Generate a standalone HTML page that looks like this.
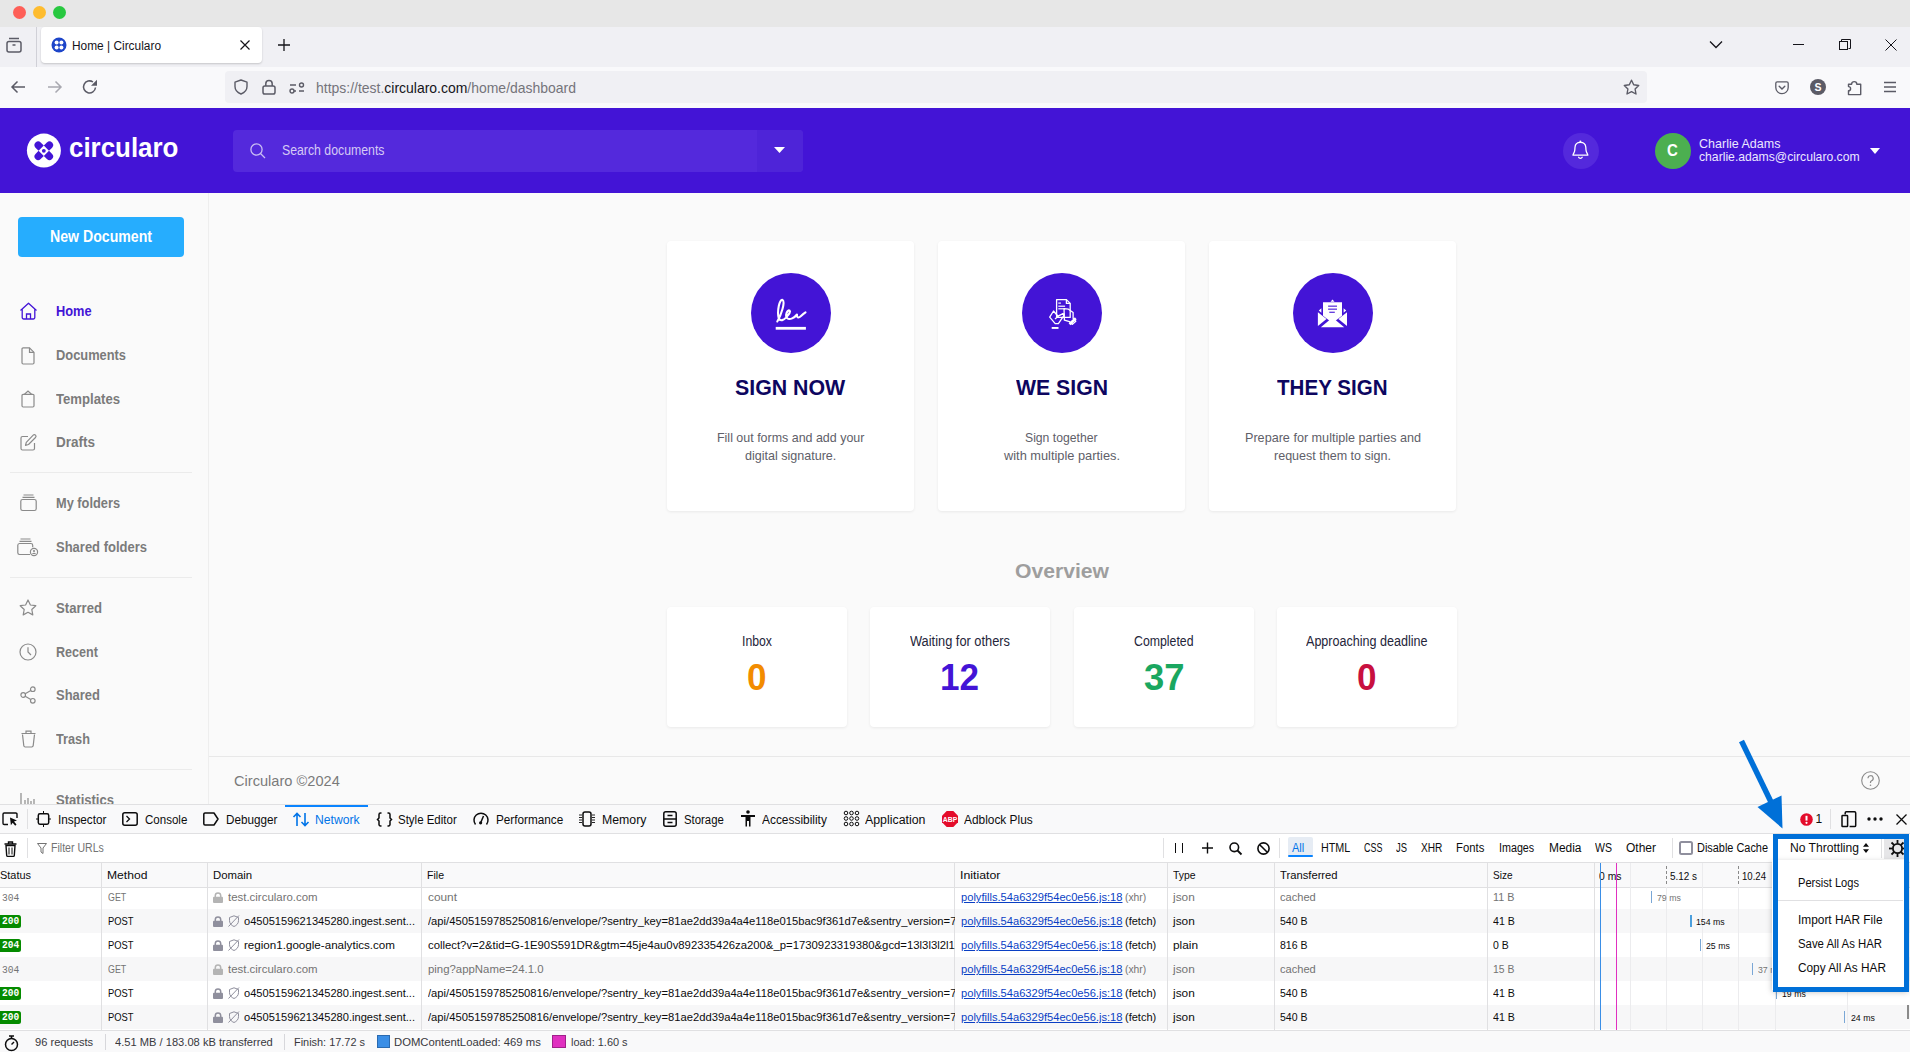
<!DOCTYPE html>
<html><head><meta charset="utf-8">
<style>
*{box-sizing:border-box;margin:0;padding:0}
html,body{width:1910px;height:1052px;overflow:hidden;background:#fafafa;font-family:"Liberation Sans",sans-serif}
.a{position:absolute}
.t{position:absolute;white-space:nowrap;line-height:1}
svg.i{position:absolute;overflow:visible}
</style></head><body>
<div class="a" style="left:0px;top:0px;width:1910px;height:27px;background:#e7e7e7;"></div>
<div class="a" style="left:12.5px;top:5.5px;width:13px;height:13px;background:#fe5f57;border-radius:50%"></div>
<div class="a" style="left:32.5px;top:5.5px;width:13px;height:13px;background:#febc2e;border-radius:50%"></div>
<div class="a" style="left:52.5px;top:5.5px;width:13px;height:13px;background:#28c840;border-radius:50%"></div>
<div class="a" style="left:0px;top:27px;width:1910px;height:40px;background:#f0f0f4;"></div>
<div class="a" style="left:0px;top:67px;width:1910px;height:41px;background:#f9f9fb;"></div>
<div class="a" style="left:36px;top:27px;width:1px;height:40px;background:#d0d0d7;"></div>
<svg class="i" style="left:6px;top:37px;" width="16" height="16" viewBox="0 0 16 16"><rect x="1" y="4.5" width="14" height="10.5" rx="2" fill="none" stroke="#5b5b66" stroke-width="1.5"/><path d="M3 1.5h10" stroke="#5b5b66" stroke-width="1.5"/><path d="M6.5 8h3" stroke="#5b5b66" stroke-width="1.5"/></svg>
<div class="a" style="left:41px;top:27px;width:221px;height:36px;background:#ffffff;border-radius:4px;box-shadow:0 1px 2px rgba(0,0,0,.18)"></div>
<svg class="i" style="left:51px;top:37px;" width="16" height="16" viewBox="0 0 16 16"><circle cx="8" cy="8" r="7.5" fill="#1d45c9"/><circle cx="5.6" cy="5.6" r="2" fill="#fff"/><circle cx="10.4" cy="5.6" r="2" fill="#fff"/><circle cx="5.6" cy="10.4" r="2" fill="#fff"/><circle cx="10.4" cy="10.4" r="2" fill="#fff"/><circle cx="8" cy="8" r="1" fill="#1d45c9"/></svg>
<div class="t" style="left:72.4px;top:39.84px;font:400 12px 'Liberation Sans', sans-serif;line-height:1;color:#15141a;transform:scaleX(0.9910);transform-origin:0 0;">Home | Circularo</div>
<svg class="i" style="left:239px;top:39px;" width="12" height="12" viewBox="0 0 12 12"><path d="M1.5 1.5l9 9M10.5 1.5l-9 9" stroke="#15141a" stroke-width="1.2"/></svg>
<svg class="i" style="left:277px;top:38px;" width="14" height="14" viewBox="0 0 14 14"><path d="M7 1v12M1 7h12" stroke="#15141a" stroke-width="1.3"/></svg>
<svg class="i" style="left:1709px;top:40px;" width="14" height="9" viewBox="0 0 14 9"><path d="M1 1.5l6 6 6-6" fill="none" stroke="#15141a" stroke-width="1.3"/></svg>
<div class="a" style="left:1793px;top:44px;width:11px;height:1px;background:#15141a;"></div>
<svg class="i" style="left:1839px;top:39px;" width="12" height="12" viewBox="0 0 12 12"><rect x="0.5" y="2.5" width="8" height="8" fill="none" stroke="#15141a" stroke-width="1"/><path d="M2.5 2.5V0.5h9v9h-2" fill="none" stroke="#15141a" stroke-width="1"/></svg>
<svg class="i" style="left:1885px;top:39px;" width="12" height="12" viewBox="0 0 12 12"><path d="M0.5 0.5l11 11M11.5 0.5l-11 11" stroke="#15141a" stroke-width="1"/></svg>
<svg class="i" style="left:10px;top:80px;" width="16" height="14" viewBox="0 0 16 14"><path d="M15 7H2M7.5 1.5L2 7l5.5 5.5" fill="none" stroke="#5b5b66" stroke-width="1.5"/></svg>
<svg class="i" style="left:47px;top:80px;" width="16" height="14" viewBox="0 0 16 14"><path d="M1 7h13M8.5 1.5L14 7l-5.5 5.5" fill="none" stroke="#a8a8b0" stroke-width="1.5"/></svg>
<svg class="i" style="left:82px;top:79px;" width="16" height="16" viewBox="0 0 16 16"><path d="M13.5 8.5A6 6 0 1 1 11 3" fill="none" stroke="#5b5b66" stroke-width="1.5"/><path d="M15 0.8v6h-6z" fill="#5b5b66"/></svg>
<div class="a" style="left:225px;top:71px;width:1422px;height:31.5px;background:#f0f0f4;border-radius:4px"></div>
<svg class="i" style="left:233px;top:79px;" width="16" height="16" viewBox="0 0 16 16"><path d="M8 1L2 3.2v4.3c0 3.5 2.7 6.2 6 7.5 3.3-1.3 6-4 6-7.5V3.2z" fill="none" stroke="#5b5b66" stroke-width="1.4" stroke-linejoin="round"/></svg>
<svg class="i" style="left:262px;top:79px;" width="14" height="16" viewBox="0 0 14 16"><rect x="1" y="7" width="12" height="8" rx="1.8" fill="none" stroke="#5b5b66" stroke-width="1.5"/><path d="M3.8 7V4.8a3.2 3.2 0 0 1 6.4 0V7" fill="none" stroke="#5b5b66" stroke-width="1.5"/></svg>
<svg class="i" style="left:289px;top:82px;" width="16" height="12" viewBox="0 0 16 12"><path d="M1 9h6M10 3H15M1 3h6M10 9h5" stroke="#5b5b66" stroke-width="1.5"/><circle cx="3" cy="9" r="2" fill="#f0f0f4" stroke="#5b5b66" stroke-width="1.4"/><circle cx="12.5" cy="3" r="2" fill="#f0f0f4" stroke="#5b5b66" stroke-width="1.4"/></svg>
<div class="t" style="left:315.5px;top:81.03px;font:400 14.5px 'Liberation Sans', sans-serif;line-height:1;color:#15141a;transform:scaleX(0.9630);transform-origin:0 0;"><span style="color:#75747b">https://test.</span>circularo.com<span style="color:#75747b">/home/dashboard</span></div>
<svg class="i" style="left:1623px;top:79px;" width="17" height="17" viewBox="0 0 17 17"><path d="M8.5 1.2l2.2 4.6 5 .7-3.6 3.5.9 5-4.5-2.4-4.5 2.4.9-5L1.3 6.5l5-.7z" fill="none" stroke="#5b5b66" stroke-width="1.4" stroke-linejoin="round"/></svg>
<svg class="i" style="left:1775px;top:81px;" width="14" height="14" viewBox="0 0 14 14"><path d="M2.2 .8h9.6A1.4 1.4 0 0 1 13.2 2.2V6.5a6.2 6.2 0 0 1-12.4 0V2.2A1.4 1.4 0 0 1 2.2 .8z" fill="none" stroke="#5b5b66" stroke-width="1.3"/><path d="M4.2 5.3L7 8l2.8-2.7" fill="none" stroke="#5b5b66" stroke-width="1.4" stroke-linecap="round"/></svg>
<svg class="i" style="left:1810px;top:79px;" width="16" height="16" viewBox="0 0 16 16"><circle cx="8" cy="8" r="8" fill="#5b5b66"/><text x="8" y="12" text-anchor="middle" font-family="Liberation Sans" font-weight="700" font-size="10.5" fill="#fff">S</text></svg>
<svg class="i" style="left:1847px;top:81px;" width="16" height="16" viewBox="0 0 16 16"><path d="M1.5 3.2H4.6A2.6 2.6 0 0 1 9.8 3.2H13.7V13.6H1.5V9.8A2.1 2.1 0 0 0 1.5 5.6Z" fill="none" stroke="#5b5b66" stroke-width="1.4" stroke-linejoin="round"/></svg>
<svg class="i" style="left:1883px;top:81px;" width="14" height="12" viewBox="0 0 14 12"><path d="M1 1.5h12M1 6h12M1 10.5h12" stroke="#5b5b66" stroke-width="1.4"/></svg>
<div class="a" style="left:0px;top:108px;width:1910px;height:85px;background:#4314d6;"></div>
<svg class="i" style="left:26px;top:133px;" width="36" height="36" viewBox="0 0 36 36"><circle cx="17.9" cy="17.6" r="17" fill="#fff"/><g fill="#4314d6"><path d="M17.8 12.6L12.6 17.8L9.48 14.68A3.68 3.68 0 0 1 14.68 9.48Z"/><path d="M17.8 12.6L23 17.8L26.12 14.68A3.68 3.68 0 0 0 20.92 9.48Z"/><path d="M17.8 23L12.6 17.8L9.48 20.92A3.68 3.68 0 0 0 14.68 26.12Z"/><path d="M17.8 23L23 17.8L26.12 20.92A3.68 3.68 0 0 1 20.92 26.12Z"/><circle cx="17.8" cy="17.8" r="1.9"/></g></svg>
<div class="t" style="left:68.5px;top:135.14px;font:700 27px 'Liberation Sans', sans-serif;line-height:1;color:#ffffff;transform:scaleX(0.9591);transform-origin:0 0;">circularo</div>
<div class="a" style="left:233px;top:130px;width:570px;height:42px;background:#5429dc;border-radius:4px"></div>
<div class="a" style="left:757px;top:130px;width:46px;height:42px;background:#4e24d8;border-radius:0 4px 4px 0"></div>
<svg class="i" style="left:250px;top:143px;" width="16" height="16" viewBox="0 0 16 16"><circle cx="6.5" cy="6.5" r="5.6" fill="none" stroke="#c9bdf3" stroke-width="1.3"/><path d="M10.5 10.5l4.5 4.5" stroke="#c9bdf3" stroke-width="1.3"/></svg>
<div class="t" style="left:282.0px;top:143.15px;font:400 14px 'Liberation Sans', sans-serif;line-height:1;color:#d4caf5;transform:scaleX(0.8781);transform-origin:0 0;">Search documents</div>
<svg class="i" style="left:774px;top:147px;" width="11" height="7" viewBox="0 0 11 7"><path d="M0 0h11L5.5 6z" fill="#ffffff"/></svg>
<div class="a" style="left:1563px;top:133px;width:36px;height:36px;background:#5429dc;border-radius:50%"></div>
<svg class="i" style="left:1571px;top:140px;" width="19" height="20" viewBox="0 0 19 20"><circle cx="9.4" cy="1.4" r="1" fill="#fff"/><path d="M2 15.2C2 13.6 3.6 13 3.8 10L4 7.2C4.2 4.2 6.5 2.3 9.4 2.3S14.6 4.2 14.8 7.2L15 10C15.2 13 16.8 13.6 16.8 15.2Z" fill="none" stroke="#fff" stroke-width="1.3" stroke-linejoin="round"/><path d="M7.6 17.3A2 2 0 0 0 11.2 17.3" fill="none" stroke="#fff" stroke-width="1.3" stroke-linecap="round"/></svg>
<div class="a" style="left:1655px;top:133px;width:36px;height:36px;background:#4caf50;border-radius:50%"></div>
<div class="t" style="left:1667.3px;top:143.46px;font:700 16px 'Liberation Sans', sans-serif;line-height:1;color:#ffffff;transform:scaleX(0.9341);transform-origin:0 0;">C</div>
<div class="t" style="left:1698.8px;top:136.57px;font:400 13.5px 'Liberation Sans', sans-serif;line-height:1;color:#ece8ff;transform:scaleX(0.9271);transform-origin:0 0;">Charlie Adams</div>
<div class="t" style="left:1698.8px;top:150.37px;font:400 13.5px 'Liberation Sans', sans-serif;line-height:1;color:#ece8ff;transform:scaleX(0.9022);transform-origin:0 0;">charlie.adams@circularo.com</div>
<svg class="i" style="left:1870px;top:148px;" width="10" height="6" viewBox="0 0 10 6"><path d="M0 0h10L5 6z" fill="#ffffff"/></svg>
<div class="a" style="left:208px;top:193px;width:1px;height:611px;background:#eeeeee;"></div>
<div class="a" style="left:18px;top:217px;width:166px;height:40px;background:#26adfe;border-radius:4px"></div>
<div class="t" style="left:50.0px;top:228.76px;font:700 16px 'Liberation Sans', sans-serif;line-height:1;color:#ffffff;transform:scaleX(0.8825);transform-origin:0 0;">New Document</div>
<div class="t" style="left:55.5px;top:304.15px;font:700 14px 'Liberation Sans', sans-serif;line-height:1;color:#4314d6;transform:scaleX(0.9150);transform-origin:0 0;">Home</div>
<div class="t" style="left:55.5px;top:348.15px;font:700 14px 'Liberation Sans', sans-serif;line-height:1;color:#7b7b7b;transform:scaleX(0.9182);transform-origin:0 0;">Documents</div>
<div class="t" style="left:55.5px;top:392.15px;font:700 14px 'Liberation Sans', sans-serif;line-height:1;color:#7b7b7b;transform:scaleX(0.9382);transform-origin:0 0;">Templates</div>
<div class="t" style="left:55.5px;top:435.15px;font:700 14px 'Liberation Sans', sans-serif;line-height:1;color:#7b7b7b;transform:scaleX(0.9637);transform-origin:0 0;">Drafts</div>
<div class="t" style="left:55.5px;top:496.15px;font:700 14px 'Liberation Sans', sans-serif;line-height:1;color:#7b7b7b;transform:scaleX(0.9141);transform-origin:0 0;">My folders</div>
<div class="t" style="left:55.5px;top:540.15px;font:700 14px 'Liberation Sans', sans-serif;line-height:1;color:#7b7b7b;transform:scaleX(0.9283);transform-origin:0 0;">Shared folders</div>
<div class="t" style="left:55.5px;top:601.15px;font:700 14px 'Liberation Sans', sans-serif;line-height:1;color:#7b7b7b;transform:scaleX(0.9382);transform-origin:0 0;">Starred</div>
<div class="t" style="left:55.5px;top:645.15px;font:700 14px 'Liberation Sans', sans-serif;line-height:1;color:#7b7b7b;transform:scaleX(0.8996);transform-origin:0 0;">Recent</div>
<div class="t" style="left:55.5px;top:688.15px;font:700 14px 'Liberation Sans', sans-serif;line-height:1;color:#7b7b7b;transform:scaleX(0.9269);transform-origin:0 0;">Shared</div>
<div class="t" style="left:55.5px;top:732.15px;font:700 14px 'Liberation Sans', sans-serif;line-height:1;color:#7b7b7b;transform:scaleX(0.9101);transform-origin:0 0;">Trash</div>
<div class="t" style="left:55.5px;top:793.15px;font:700 14px 'Liberation Sans', sans-serif;line-height:1;color:#7b7b7b;transform:scaleX(0.9317);transform-origin:0 0;">Statistics</div>
<div class="a" style="left:10px;top:472px;width:182px;height:1px;background:#ebebeb;"></div>
<div class="a" style="left:10px;top:577px;width:182px;height:1px;background:#ebebeb;"></div>
<div class="a" style="left:10px;top:769px;width:182px;height:1px;background:#ebebeb;"></div>
<svg class="i" style="left:19px;top:302px;" width="19" height="18" viewBox="0 0 19 18"><path d="M1.5 8.5L9.5 1.2l8 7.3" fill="none" stroke="#4314d6" stroke-width="1.3" stroke-linejoin="round"/><path d="M3.2 7.3v8.2a1.5 1.5 0 0 0 1.5 1.5h9.6a1.5 1.5 0 0 0 1.5-1.5V7.3" fill="none" stroke="#4314d6" stroke-width="1.3"/><path d="M7.5 17v-5h4v5" fill="none" stroke="#4314d6" stroke-width="1.3"/></svg>
<svg class="i" style="left:21px;top:347px;" width="14" height="17" viewBox="0 0 14 17"><path d="M1 2a1.2 1.2 0 0 1 1.2-1.2h6.3L13 5.3v10.5a1.2 1.2 0 0 1-1.2 1.2H2.2A1.2 1.2 0 0 1 1 15.8z" fill="none" stroke="#8a8a8a" stroke-width="1.2" stroke-linejoin="round"/><path d="M8.5 .8v4.5H13" fill="none" stroke="#8a8a8a" stroke-width="1.2"/></svg>
<svg class="i" style="left:21px;top:390px;" width="14" height="17" viewBox="0 0 14 17"><path d="M1 5.5V15.8A1.2 1.2 0 0 0 2.2 17h9.6a1.2 1.2 0 0 0 1.2-1.2V5.5A1.2 1.2 0 0 0 11.8 4.3H2.2A1.2 1.2 0 0 0 1 5.5z" fill="none" stroke="#8a8a8a" stroke-width="1.2"/><path d="M3.5 4.3L7 1l3.5 3.3" fill="none" stroke="#8a8a8a" stroke-width="1.2"/></svg>
<svg class="i" style="left:20px;top:434px;" width="17" height="17" viewBox="0 0 17 17"><path d="M8 2.5H2.5A1.5 1.5 0 0 0 1 4v10.5A1.5 1.5 0 0 0 2.5 16H13a1.5 1.5 0 0 0 1.5-1.5V9" fill="none" stroke="#8a8a8a" stroke-width="1.2"/><path d="M13.2 1.2a1.6 1.6 0 0 1 2.3 2.3L8.5 10.5l-3 .8.8-3z" fill="none" stroke="#8a8a8a" stroke-width="1.2" stroke-linejoin="round"/></svg>
<svg class="i" style="left:20px;top:494px;" width="17" height="17" viewBox="0 0 17 17"><rect x="0.8" y="5.5" width="15.4" height="11" rx="1.8" fill="none" stroke="#8a8a8a" stroke-width="1.2"/><path d="M2.5 3.3h12M3.5 1h10" stroke="#8a8a8a" stroke-width="1.2"/></svg>
<svg class="i" style="left:17px;top:538px;" width="22" height="18" viewBox="0 0 22 18"><path d="M13 16.5H2.5A1.8 1.8 0 0 1 .8 14.7V7.3A1.8 1.8 0 0 1 2.5 5.5h11.4a1.8 1.8 0 0 1 1.8 1.8v2" fill="none" stroke="#8a8a8a" stroke-width="1.2"/><path d="M2.5 3.3h12M3.5 1h10" stroke="#8a8a8a" stroke-width="1.2"/><circle cx="17" cy="14" r="3.6" fill="none" stroke="#8a8a8a" stroke-width="1.2"/><circle cx="17" cy="13" r="1.1" fill="#8a8a8a"/><path d="M15 16a2.2 2.2 0 0 1 4 0" fill="#8a8a8a"/></svg>
<svg class="i" style="left:19px;top:599px;" width="18" height="17" viewBox="0 0 18 17"><path d="M9 1l2.4 5 5.4.7-4 3.8 1 5.4L9 13.3 4.2 15.9l1-5.4-4-3.8 5.4-.7z" fill="none" stroke="#8a8a8a" stroke-width="1.2" stroke-linejoin="round"/></svg>
<svg class="i" style="left:19px;top:643px;" width="18" height="18" viewBox="0 0 18 18"><circle cx="9" cy="9" r="8" fill="none" stroke="#8a8a8a" stroke-width="1.2"/><path d="M9 4.2V9l3 3" fill="none" stroke="#8a8a8a" stroke-width="1.2"/></svg>
<svg class="i" style="left:20px;top:686px;" width="16" height="18" viewBox="0 0 16 18"><circle cx="12.8" cy="3.2" r="2.3" fill="none" stroke="#8a8a8a" stroke-width="1.2"/><circle cx="3.2" cy="9" r="2.3" fill="none" stroke="#8a8a8a" stroke-width="1.2"/><circle cx="12.8" cy="14.8" r="2.3" fill="none" stroke="#8a8a8a" stroke-width="1.2"/><path d="M5.2 7.8l5.6-3.4M5.2 10.2l5.6 3.4" stroke="#8a8a8a" stroke-width="1.2"/></svg>
<svg class="i" style="left:21px;top:730px;" width="15" height="18" viewBox="0 0 15 18"><path d="M1.5 4.5l1.3 11.2a1.5 1.5 0 0 0 1.5 1.3h6.4a1.5 1.5 0 0 0 1.5-1.3L13.5 4.5" fill="none" stroke="#8a8a8a" stroke-width="1.2"/><path d="M.5 3.5h14M5 3.3V1.2h5v2.1" fill="none" stroke="#8a8a8a" stroke-width="1.2"/></svg>
<svg class="i" style="left:20px;top:793px;" width="16" height="14" viewBox="0 0 16 14"><path d="M1 0v13.5h15M5 13V7M8 13V5M11 13V8M14 13V6" fill="none" stroke="#8a8a8a" stroke-width="1.2"/></svg>
<div class="a" style="left:209px;top:193px;width:1701px;height:564px;background:#fafafa;"></div>
<div class="a" style="left:667px;top:241px;width:247px;height:270px;background:#ffffff;border-radius:4px;box-shadow:0 1px 3px rgba(0,0,0,.07)"></div>
<div class="a" style="left:750.5px;top:273px;width:80px;height:80px;background:#4314d6;border-radius:50%"></div>
<svg class="i" style="left:750.5px;top:273px;" width="80" height="80" viewBox="0 0 80 80"><path d="M26.3 48.5C30 42.5 34.5 29 31.6 27C28.5 25.5 25.8 38.5 27.8 45.5C29.3 48.8 33 46.8 35 44.6C37 42 40.2 38.8 38.6 37.6C36.5 36.3 33.5 42.5 36.3 45.3C38.8 47.3 43.5 44.8 46 41.5C45.6 44.5 47.3 45.6 50 43C51.5 41.6 53 40.3 54.5 39.3" fill="none" stroke="#ffffff" stroke-width="2.1" stroke-linecap="round" stroke-linejoin="round"/><rect x="24.7" y="53.9" width="30.2" height="2.8" fill="#ffffff"/></svg>
<div class="t" style="left:735.4px;top:377.38px;font:700 22px 'Liberation Sans', sans-serif;line-height:1;color:#0d0660;transform:scaleX(0.9695);transform-origin:0 0;">SIGN NOW</div>
<div class="t" style="left:716.8px;top:430.50px;font:400 13px 'Liberation Sans', sans-serif;line-height:1;color:#606069;transform:scaleX(0.9577);transform-origin:0 0;">Fill out forms and add your</div>
<div class="t" style="left:744.9px;top:448.50px;font:400 13px 'Liberation Sans', sans-serif;line-height:1;color:#606069;transform:scaleX(0.9644);transform-origin:0 0;">digital signature.</div>
<div class="a" style="left:938px;top:241px;width:247px;height:270px;background:#ffffff;border-radius:4px;box-shadow:0 1px 3px rgba(0,0,0,.07)"></div>
<div class="a" style="left:1021.5px;top:273px;width:80px;height:80px;background:#4314d6;border-radius:50%"></div>
<svg class="i" style="left:1021.5px;top:273px;" width="80" height="80" viewBox="0 0 80 80"><g fill="none" stroke="#ffffff" stroke-width="1.3" stroke-linejoin="round"><path d="M34.6 26.6h9.8l3.8 3.8v14H34.6z"/><path d="M44.4 26.6v3.8h3.8"/><path d="M42 35.6l4.5 0.6 4.6 3.4v5.6l2.7 3-3.4 3.2-3-2.8-5-1.4z" /><path d="M31.5 38l4.5 5.2 5-2.6 1 1.8-5.6 8.2h-3.2l-5.5-6.4z"/><path d="M33 46l3.5-3"/></g><g fill="#ffffff"><rect x="36.3" y="29.5" width="2.6" height="1.2"/><rect x="36.3" y="32.6" width="6.8" height="1.2"/><rect x="36.3" y="35.2" width="6.8" height="1.2"/><rect x="29.7" y="54" width="6.8" height="1.9"/></g><path d="M47.5 51.3l6.3-6.1" stroke="#ffffff" stroke-width="2.6"/><path d="M40 41.5c1-1 2-1 3 0" stroke="#ffffff" stroke-width="0.9" fill="none"/></svg>
<div class="t" style="left:1015.5px;top:377.38px;font:700 22px 'Liberation Sans', sans-serif;line-height:1;color:#0d0660;transform:scaleX(0.9649);transform-origin:0 0;">WE SIGN</div>
<div class="t" style="left:1025.2px;top:430.50px;font:400 13px 'Liberation Sans', sans-serif;line-height:1;color:#606069;transform:scaleX(0.9374);transform-origin:0 0;">Sign together</div>
<div class="t" style="left:1003.5px;top:448.50px;font:400 13px 'Liberation Sans', sans-serif;line-height:1;color:#606069;transform:scaleX(0.9849);transform-origin:0 0;">with multiple parties.</div>
<div class="a" style="left:1209px;top:241px;width:247px;height:270px;background:#ffffff;border-radius:4px;box-shadow:0 1px 3px rgba(0,0,0,.07)"></div>
<div class="a" style="left:1292.5px;top:273px;width:80px;height:80px;background:#4314d6;border-radius:50%"></div>
<svg class="i" style="left:1292.5px;top:273px;" width="80" height="80" viewBox="0 0 80 80"><g fill="#ffffff"><path d="M30 29.2h19v13.5l-9.5 7.3-9.5-7.3z"/><path d="M37.5 28.8l2-2.4 2 2.4z"/><path d="M24.9 39.3l8.6 6.6-8.6 7.2z"/><path d="M54 39.3l-8.6 6.6 8.6 7.2z"/><path d="M27.8 54.2l11.7-9.6 11.7 9.6z"/><path d="M25.8 37.6l2.6-2.4v4.6z"/><path d="M53.2 37.6l-2.6-2.4v4.6z"/></g><g fill="#4314d6"><rect x="35.1" y="32.6" width="8.9" height="1.1"/><rect x="35.1" y="35.6" width="8.9" height="1.1"/><rect x="36.3" y="38.7" width="5.5" height="1.1"/></g></svg>
<div class="t" style="left:1277.2px;top:377.38px;font:700 22px 'Liberation Sans', sans-serif;line-height:1;color:#0d0660;transform:scaleX(0.9350);transform-origin:0 0;">THEY SIGN</div>
<div class="t" style="left:1244.5px;top:430.50px;font:400 13px 'Liberation Sans', sans-serif;line-height:1;color:#606069;transform:scaleX(0.9704);transform-origin:0 0;">Prepare for multiple parties and</div>
<div class="t" style="left:1274.0px;top:448.50px;font:400 13px 'Liberation Sans', sans-serif;line-height:1;color:#606069;transform:scaleX(0.9637);transform-origin:0 0;">request them to sign.</div>
<div class="t" style="left:1014.5px;top:560.22px;font:700 21px 'Liberation Sans', sans-serif;line-height:1;color:#9e9e9e;transform:scaleX(1.0064);transform-origin:0 0;">Overview</div>
<div class="a" style="left:667px;top:607px;width:179.5px;height:120px;background:#ffffff;border-radius:4px;box-shadow:0 1px 3px rgba(0,0,0,.07)"></div>
<div class="t" style="left:741.8px;top:633.65px;font:400 14px 'Liberation Sans', sans-serif;line-height:1;color:#25253a;transform:scaleX(0.8759);transform-origin:0 0;">Inbox</div>
<div class="t" style="left:747.0px;top:659.53px;font:700 36px 'Liberation Sans', sans-serif;line-height:1;color:#f28c00;transform:scaleX(0.9735);transform-origin:0 0;">0</div>
<div class="a" style="left:870px;top:607px;width:179.5px;height:120px;background:#ffffff;border-radius:4px;box-shadow:0 1px 3px rgba(0,0,0,.07)"></div>
<div class="t" style="left:909.8px;top:633.65px;font:400 14px 'Liberation Sans', sans-serif;line-height:1;color:#25253a;transform:scaleX(0.9157);transform-origin:0 0;">Waiting for others</div>
<div class="t" style="left:940.2px;top:659.53px;font:700 36px 'Liberation Sans', sans-serif;line-height:1;color:#4314d6;transform:scaleX(0.9739);transform-origin:0 0;">12</div>
<div class="a" style="left:1074px;top:607px;width:179.5px;height:120px;background:#ffffff;border-radius:4px;box-shadow:0 1px 3px rgba(0,0,0,.07)"></div>
<div class="t" style="left:1134.0px;top:633.65px;font:400 14px 'Liberation Sans', sans-serif;line-height:1;color:#25253a;transform:scaleX(0.8788);transform-origin:0 0;">Completed</div>
<div class="t" style="left:1143.5px;top:659.53px;font:700 36px 'Liberation Sans', sans-serif;line-height:1;color:#1aa760;transform:scaleX(1.0113);transform-origin:0 0;">37</div>
<div class="a" style="left:1277px;top:607px;width:179.5px;height:120px;background:#ffffff;border-radius:4px;box-shadow:0 1px 3px rgba(0,0,0,.07)"></div>
<div class="t" style="left:1306.0px;top:633.65px;font:400 14px 'Liberation Sans', sans-serif;line-height:1;color:#25253a;transform:scaleX(0.8970);transform-origin:0 0;">Approaching deadline</div>
<div class="t" style="left:1357.0px;top:659.53px;font:700 36px 'Liberation Sans', sans-serif;line-height:1;color:#c8103f;transform:scaleX(0.9735);transform-origin:0 0;">0</div>
<div class="a" style="left:209px;top:756px;width:1701px;height:1px;background:#e8e8e8;"></div>
<div class="a" style="left:209px;top:757px;width:1701px;height:47px;background:#fafafa;"></div>
<div class="t" style="left:233.5px;top:773.30px;font:400 15px 'Liberation Sans', sans-serif;line-height:1;color:#7a7a7a;transform:scaleX(0.9741);transform-origin:0 0;">Circularo ©2024</div>
<svg class="i" style="left:1861px;top:771px;" width="19" height="19" viewBox="0 0 19 19"><circle cx="9.5" cy="9.5" r="8.8" fill="none" stroke="#8a8a8a" stroke-width="1.1"/><path d="M7 7.3a2.6 2.6 0 1 1 3.6 2.4c-.7.3-1.1.8-1.1 1.5v.8" fill="none" stroke="#8a8a8a" stroke-width="1.2"/><circle cx="9.5" cy="14.2" r=".8" fill="#8a8a8a"/></svg>
<div class="a" style="left:0px;top:804px;width:1910px;height:248px;background:#ffffff;"></div>
<div class="a" style="left:0px;top:804px;width:1910px;height:1px;background:#e0e0e2;"></div>
<div class="a" style="left:0px;top:805px;width:1910px;height:28px;background:#f9f9fa;"></div>
<div class="a" style="left:0px;top:833px;width:1910px;height:1px;background:#e0e0e2;"></div>
<div class="a" style="left:284.8px;top:805px;width:83.2px;height:2px;background:#0a84ff;"></div>
<div class="t" style="left:57.6px;top:813.74px;font:400 12px 'Liberation Sans', sans-serif;line-height:1;color:#0c0c0d;transform:scaleX(0.9826);transform-origin:0 0;">Inspector</div>
<div class="t" style="left:144.8px;top:813.74px;font:400 12px 'Liberation Sans', sans-serif;line-height:1;color:#0c0c0d;transform:scaleX(0.9607);transform-origin:0 0;">Console</div>
<div class="t" style="left:225.5px;top:813.74px;font:400 12px 'Liberation Sans', sans-serif;line-height:1;color:#0c0c0d;transform:scaleX(0.9750);transform-origin:0 0;">Debugger</div>
<div class="t" style="left:315.2px;top:813.74px;font:400 12px 'Liberation Sans', sans-serif;line-height:1;color:#0074e8;transform:scaleX(1.0133);transform-origin:0 0;">Network</div>
<div class="t" style="left:398.1px;top:813.74px;font:400 12px 'Liberation Sans', sans-serif;line-height:1;color:#0c0c0d;transform:scaleX(0.9567);transform-origin:0 0;">Style Editor</div>
<div class="t" style="left:495.5px;top:813.74px;font:400 12px 'Liberation Sans', sans-serif;line-height:1;color:#0c0c0d;transform:scaleX(0.9781);transform-origin:0 0;">Performance</div>
<div class="t" style="left:601.5px;top:813.74px;font:400 12px 'Liberation Sans', sans-serif;line-height:1;color:#0c0c0d;transform:scaleX(1.0244);transform-origin:0 0;">Memory</div>
<div class="t" style="left:684.2px;top:813.74px;font:400 12px 'Liberation Sans', sans-serif;line-height:1;color:#0c0c0d;transform:scaleX(0.9469);transform-origin:0 0;">Storage</div>
<div class="t" style="left:761.9px;top:813.74px;font:400 12px 'Liberation Sans', sans-serif;line-height:1;color:#0c0c0d;transform:scaleX(0.9930);transform-origin:0 0;">Accessibility</div>
<div class="t" style="left:865.1px;top:813.74px;font:400 12px 'Liberation Sans', sans-serif;line-height:1;color:#0c0c0d;transform:scaleX(1.0303);transform-origin:0 0;">Application</div>
<div class="t" style="left:964.0px;top:813.74px;font:400 12px 'Liberation Sans', sans-serif;line-height:1;color:#0c0c0d;transform:scaleX(0.9903);transform-origin:0 0;">Adblock Plus</div>
<svg class="i" style="left:2px;top:812px;" width="16" height="14" viewBox="0 0 16 14"><path d="M6 12.5H2.2A1.2 1.2 0 0 1 1 11.3V2.2A1.2 1.2 0 0 1 2.2 1h11.6A1.2 1.2 0 0 1 15 2.2V6" fill="none" stroke="#0c0c0d" stroke-width="1.4"/><path d="M8 5.5l7 3-3 1 2.5 3-1.3 1.2-2.5-3-1.8 2.5z" fill="#0c0c0d"/></svg>
<div class="a" style="left:26.5px;top:809px;width:1px;height:20px;background:#e0e0e2;"></div>
<svg class="i" style="left:35.5px;top:811px;" width="15" height="16" viewBox="0 0 15 16"><rect x="2.3" y="2.8" width="10.4" height="10.4" rx="1.6" fill="none" stroke="#0c0c0d" stroke-width="1.5"/><path d="M7.5 0v2.8M7.5 13.2V16M0 8h2.3M12.7 8H15" stroke="#0c0c0d" stroke-width="1"/></svg>
<svg class="i" style="left:122px;top:812px;" width="16" height="14" viewBox="0 0 16 14"><rect x=".8" y=".8" width="14.4" height="12.4" rx="2" fill="none" stroke="#0c0c0d" stroke-width="1.5"/><path d="M4.5 4l3 3-3 3" fill="none" stroke="#0c0c0d" stroke-width="1.3"/></svg>
<svg class="i" style="left:203px;top:812px;" width="16" height="14" viewBox="0 0 16 14"><path d="M2 1h9l4 6-4 6H2a1.2 1.2 0 0 1-1.2-1.2V2.2A1.2 1.2 0 0 1 2 1z" fill="none" stroke="#0c0c0d" stroke-width="1.5" stroke-linejoin="round"/></svg>
<svg class="i" style="left:293px;top:812px;" width="16" height="15" viewBox="0 0 16 15"><path d="M4 14V1.5M.5 5L4 1.5 7.5 5M12 1v12.5M8.5 10l3.5 3.5 3.5-3.5" fill="none" stroke="#0074e8" stroke-width="1.6"/></svg>
<svg class="i" style="left:377px;top:812px;" width="15" height="15" viewBox="0 0 15 15"><path d="M4.5 1H3.5A1.5 1.5 0 0 0 2 2.5v3.5L.5 7.5 2 9v3.5A1.5 1.5 0 0 0 3.5 14h1M10.5 1h1A1.5 1.5 0 0 1 13 2.5v3.5l1.5 1.5L13 9v3.5a1.5 1.5 0 0 1-1.5 1.5h-1" fill="none" stroke="#0c0c0d" stroke-width="1.5"/></svg>
<svg class="i" style="left:473px;top:811px;" width="16" height="15" viewBox="0 0 16 15"><path d="M2.5 13.5A7 7 0 1 1 13.5 13.5" fill="none" stroke="#0c0c0d" stroke-width="1.5"/><path d="M10.5 5L8 11" stroke="#0c0c0d" stroke-width="1.5"/><circle cx="7.6" cy="11.8" r="1.6" fill="#0c0c0d"/></svg>
<svg class="i" style="left:579px;top:811px;" width="16" height="16" viewBox="0 0 16 16"><rect x="4" y="1" width="8" height="14" rx="2" fill="none" stroke="#0c0c0d" stroke-width="1.5"/><path d="M0 4h3M0 6.5h3M0 9h3M0 11.5h3M13 4h3M13 6.5h3M13 9h3M13 11.5h3" stroke="#0c0c0d" stroke-width=".9"/></svg>
<svg class="i" style="left:663px;top:811px;" width="14" height="16" viewBox="0 0 14 16"><rect x=".8" y=".8" width="12.4" height="14.4" rx="2" fill="none" stroke="#0c0c0d" stroke-width="1.5"/><path d="M.8 8h12.4M4.5 4.5h5M4.5 11.5h5" stroke="#0c0c0d" stroke-width="1.3"/></svg>
<svg class="i" style="left:741px;top:810px;" width="14" height="17" viewBox="0 0 14 17"><circle cx="7" cy="2" r="1.8" fill="#0c0c0d"/><path d="M0 5h14v2H9.5v9.5H8V11H6v5.5H4.5V7H0z" fill="#0c0c0d"/></svg>
<svg class="i" style="left:844px;top:811px;" width="15" height="15" viewBox="0 0 15 15"><circle cx="2.0" cy="2.0" r="1.8" fill="none" stroke="#0c0c0d" stroke-width="1"/><circle cx="2.0" cy="7.5" r="1.8" fill="none" stroke="#0c0c0d" stroke-width="1"/><circle cx="2.0" cy="13.0" r="1.8" fill="none" stroke="#0c0c0d" stroke-width="1"/><circle cx="7.5" cy="2.0" r="1.8" fill="none" stroke="#0c0c0d" stroke-width="1"/><circle cx="7.5" cy="7.5" r="1.8" fill="none" stroke="#0c0c0d" stroke-width="1"/><circle cx="7.5" cy="13.0" r="1.8" fill="none" stroke="#0c0c0d" stroke-width="1"/><circle cx="13.0" cy="2.0" r="1.8" fill="none" stroke="#0c0c0d" stroke-width="1"/><circle cx="13.0" cy="7.5" r="1.8" fill="none" stroke="#0c0c0d" stroke-width="1"/><circle cx="13.0" cy="13.0" r="1.8" fill="none" stroke="#0c0c0d" stroke-width="1"/></svg>
<svg class="i" style="left:942px;top:811px;" width="16" height="16" viewBox="0 0 16 16"><path d="M4.7 0h6.6L16 4.7v6.6L11.3 16H4.7L0 11.3V4.7z" fill="#e40c2b"/><text x="8" y="10.8" text-anchor="middle" font-family="Liberation Sans" font-weight="700" font-size="6.8" fill="#fff">ABP</text></svg>
<svg class="i" style="left:1799.5px;top:813px;" width="13" height="13" viewBox="0 0 13 13"><circle cx="6.5" cy="6.5" r="6.3" fill="#e40c2b"/><path d="M6.5 2.8v4.8" stroke="#fff" stroke-width="2"/><circle cx="6.5" cy="9.8" r="1.1" fill="#fff"/></svg>
<div class="t" style="left:1815.5px;top:813.34px;font:400 12px 'Liberation Sans', sans-serif;line-height:1;color:#0c0c0d;">1</div>
<div class="a" style="left:1830px;top:809px;width:1px;height:20px;background:#e0e0e2;"></div>
<svg class="i" style="left:1841px;top:811px;" width="16" height="17" viewBox="0 0 16 17"><rect x="1" y="4.6" width="5.6" height="11" rx=".6" fill="none" stroke="#0c0c0d" stroke-width="1.5"/><path d="M4.2 3.6V1.9A1.1 1.1 0 0 1 5.3 .8H13.6A1.1 1.1 0 0 1 14.7 1.9V14.5A1.1 1.1 0 0 1 13.6 15.6H8.6" fill="none" stroke="#0c0c0d" stroke-width="1.5"/></svg>
<svg class="i" style="left:1867px;top:817px;" width="16" height="4" viewBox="0 0 16 4"><circle cx="2" cy="2" r="1.7" fill="#0c0c0d"/><circle cx="8" cy="2" r="1.7" fill="#0c0c0d"/><circle cx="14" cy="2" r="1.7" fill="#0c0c0d"/></svg>
<svg class="i" style="left:1895.5px;top:813.5px;" width="11" height="11" viewBox="0 0 11 11"><path d="M.5 .5l10 10M10.5 .5l-10 10" stroke="#0c0c0d" stroke-width="1.3"/></svg>
<div class="a" style="left:0px;top:834px;width:1910px;height:28px;background:#ffffff;"></div>
<div class="a" style="left:0px;top:862px;width:1910px;height:1px;background:#e0e0e2;"></div>
<svg class="i" style="left:4px;top:840.5px;" width="13" height="16" viewBox="0 0 13 16"><path d="M.5 3h12M4.5 3V1h4v2" fill="none" stroke="#0c0c0d" stroke-width="1.4"/><path d="M2 4.5l.7 10a1 1 0 0 0 1 .9h5.6a1 1 0 0 0 1-.9l.7-10z" fill="none" stroke="#0c0c0d" stroke-width="1.4"/><path d="M5 6.5v7M8 6.5v7" stroke="#0c0c0d" stroke-width="1"/></svg>
<div class="a" style="left:26.5px;top:838px;width:1px;height:20px;background:#e0e0e2;"></div>
<svg class="i" style="left:36.5px;top:843px;" width="10" height="11" viewBox="0 0 10 11"><path d="M.5 .5h9L6 5v5.5L4 9V5z" fill="none" stroke="#737373" stroke-width="1"/></svg>
<div class="t" style="left:51.3px;top:842.24px;font:400 12px 'Liberation Sans', sans-serif;line-height:1;color:#737373;transform:scaleX(0.8798);transform-origin:0 0;">Filter URLs</div>
<div class="a" style="left:1163px;top:838px;width:1px;height:20px;background:#e0e0e2;"></div>
<div class="a" style="left:1174.7px;top:843px;width:1.2px;height:10px;background:#0c0c0d;"></div>
<div class="a" style="left:1182.3px;top:843px;width:1.2px;height:10px;background:#0c0c0d;"></div>
<svg class="i" style="left:1202px;top:842px;" width="11" height="12" viewBox="0 0 11 12"><path d="M5.5 .5v11M0 6h11" stroke="#0c0c0d" stroke-width="1.4"/></svg>
<svg class="i" style="left:1229px;top:842px;" width="13" height="13" viewBox="0 0 13 13"><circle cx="5.3" cy="5.3" r="4.3" fill="none" stroke="#0c0c0d" stroke-width="1.6"/><path d="M8.5 8.5l4 4" stroke="#0c0c0d" stroke-width="1.8"/></svg>
<svg class="i" style="left:1257px;top:842px;" width="13" height="13" viewBox="0 0 13 13"><circle cx="6.5" cy="6.5" r="5.6" fill="none" stroke="#0c0c0d" stroke-width="1.6"/><path d="M2.7 2.7l7.6 7.6" stroke="#0c0c0d" stroke-width="1.6"/></svg>
<div class="a" style="left:1278.5px;top:838px;width:1px;height:20px;background:#e0e0e2;"></div>
<div class="a" style="left:1288px;top:837px;width:25px;height:20px;background:#e6ecf4;border-radius:2px 2px 0 0"></div>
<div class="a" style="left:1288px;top:855px;width:25px;height:2px;background:#0a84ff;border-radius:1px"></div>
<div class="t" style="left:1292.2px;top:842.04px;font:400 12px 'Liberation Sans', sans-serif;line-height:1;color:#0074e8;transform:scaleX(0.9143);transform-origin:0 0;">All</div>
<div class="t" style="left:1321.3px;top:842.04px;font:400 12px 'Liberation Sans', sans-serif;line-height:1;color:#0c0c0d;transform:scaleX(0.8968);transform-origin:0 0;">HTML</div>
<div class="t" style="left:1364.2px;top:842.04px;font:400 12px 'Liberation Sans', sans-serif;line-height:1;color:#0c0c0d;transform:scaleX(0.7453);transform-origin:0 0;">CSS</div>
<div class="t" style="left:1396.4px;top:842.04px;font:400 12px 'Liberation Sans', sans-serif;line-height:1;color:#0c0c0d;transform:scaleX(0.7848);transform-origin:0 0;">JS</div>
<div class="t" style="left:1420.7px;top:842.04px;font:400 12px 'Liberation Sans', sans-serif;line-height:1;color:#0c0c0d;transform:scaleX(0.8444);transform-origin:0 0;">XHR</div>
<div class="t" style="left:1456.3px;top:842.04px;font:400 12px 'Liberation Sans', sans-serif;line-height:1;color:#0c0c0d;transform:scaleX(0.9428);transform-origin:0 0;">Fonts</div>
<div class="t" style="left:1499.3px;top:842.04px;font:400 12px 'Liberation Sans', sans-serif;line-height:1;color:#0c0c0d;transform:scaleX(0.8943);transform-origin:0 0;">Images</div>
<div class="t" style="left:1549.0px;top:842.04px;font:400 12px 'Liberation Sans', sans-serif;line-height:1;color:#0c0c0d;transform:scaleX(0.9943);transform-origin:0 0;">Media</div>
<div class="t" style="left:1595.0px;top:842.04px;font:400 12px 'Liberation Sans', sans-serif;line-height:1;color:#0c0c0d;transform:scaleX(0.8788);transform-origin:0 0;">WS</div>
<div class="t" style="left:1626.0px;top:842.04px;font:400 12px 'Liberation Sans', sans-serif;line-height:1;color:#0c0c0d;">Other</div>
<div class="a" style="left:1671.5px;top:838px;width:1px;height:20px;background:#e0e0e2;"></div>
<div class="a" style="left:1679px;top:841px;width:14px;height:14px;background:#ffffff;border:2px solid #8f8f9d;border-radius:2.5px"></div>
<div class="t" style="left:1696.6px;top:842.04px;font:400 12px 'Liberation Sans', sans-serif;line-height:1;color:#0c0c0d;transform:scaleX(0.9097);transform-origin:0 0;">Disable Cache</div>
<div class="a" style="left:0px;top:909px;width:1910px;height:24px;background:#f7f7f8;"></div>
<div class="a" style="left:0px;top:957px;width:1910px;height:24px;background:#f7f7f8;"></div>
<div class="a" style="left:0px;top:1005px;width:1910px;height:24px;background:#f7f7f8;"></div>
<div class="a" style="left:0px;top:863px;width:1594px;height:24px;background:#f9f9fa;"></div>
<div class="a" style="left:0px;top:887px;width:1910px;height:1px;background:#e0e0e2;"></div>
<div class="a" style="left:101px;top:863px;width:1px;height:167px;background:#e0e0e2;"></div>
<div class="a" style="left:207px;top:863px;width:1px;height:167px;background:#e0e0e2;"></div>
<div class="a" style="left:421px;top:863px;width:1px;height:167px;background:#e0e0e2;"></div>
<div class="a" style="left:954px;top:863px;width:1px;height:167px;background:#e0e0e2;"></div>
<div class="a" style="left:1167px;top:863px;width:1px;height:167px;background:#e0e0e2;"></div>
<div class="a" style="left:1274px;top:863px;width:1px;height:167px;background:#e0e0e2;"></div>
<div class="a" style="left:1487px;top:863px;width:1px;height:167px;background:#e0e0e2;"></div>
<div class="a" style="left:1594px;top:863px;width:1px;height:167px;background:#e0e0e2;"></div>
<div class="t" style="left:0.0px;top:870.17px;font:400 11.5px 'Liberation Sans', sans-serif;line-height:1;color:#0c0c0d;transform:scaleX(0.9506);transform-origin:0 0;">Status</div>
<div class="t" style="left:107.2px;top:870.17px;font:400 11.5px 'Liberation Sans', sans-serif;line-height:1;color:#0c0c0d;transform:scaleX(1.0532);transform-origin:0 0;">Method</div>
<div class="t" style="left:213.2px;top:870.17px;font:400 11.5px 'Liberation Sans', sans-serif;line-height:1;color:#0c0c0d;transform:scaleX(0.9889);transform-origin:0 0;">Domain</div>
<div class="t" style="left:427.4px;top:870.17px;font:400 11.5px 'Liberation Sans', sans-serif;line-height:1;color:#0c0c0d;transform:scaleX(0.9174);transform-origin:0 0;">File</div>
<div class="t" style="left:960.2px;top:870.17px;font:400 11.5px 'Liberation Sans', sans-serif;line-height:1;color:#0c0c0d;transform:scaleX(1.0711);transform-origin:0 0;">Initiator</div>
<div class="t" style="left:1173.0px;top:870.17px;font:400 11.5px 'Liberation Sans', sans-serif;line-height:1;color:#0c0c0d;transform:scaleX(0.9063);transform-origin:0 0;">Type</div>
<div class="t" style="left:1280.0px;top:870.17px;font:400 11.5px 'Liberation Sans', sans-serif;line-height:1;color:#0c0c0d;transform:scaleX(0.9760);transform-origin:0 0;">Transferred</div>
<div class="t" style="left:1493.0px;top:870.17px;font:400 11.5px 'Liberation Sans', sans-serif;line-height:1;color:#0c0c0d;transform:scaleX(0.8715);transform-origin:0 0;">Size</div>
<div class="a" style="left:1595px;top:863px;width:315px;height:24px;background:#f9f9fa;"></div>
<div class="a" style="left:1630.4px;top:863px;width:1px;height:167px;background:#ececee;"></div>
<div class="a" style="left:1702.4px;top:863px;width:1px;height:167px;background:#ececee;"></div>
<div class="a" style="left:1774.5px;top:863px;width:1px;height:167px;background:#ececee;"></div>
<div class="a" style="left:1846.5px;top:863px;width:1px;height:167px;background:#ececee;"></div>
<div class="a" style="left:1666.4px;top:866px;width:0;height:18px;border-left:1px dashed #8a8a8a"></div>
<div class="a" style="left:1666.4px;top:887px;width:1px;height:143px;background:#ececee;"></div>
<div class="a" style="left:1738.4px;top:866px;width:0;height:18px;border-left:1px dashed #8a8a8a"></div>
<div class="a" style="left:1738.4px;top:887px;width:1px;height:143px;background:#ececee;"></div>
<div class="t" style="left:1598.9px;top:871.11px;font:400 10.5px 'Liberation Sans', sans-serif;line-height:1;color:#0c0c0d;transform:scaleX(0.9883);transform-origin:0 0;">0 ms</div>
<div class="t" style="left:1670.0px;top:871.11px;font:400 10.5px 'Liberation Sans', sans-serif;line-height:1;color:#0c0c0d;transform:scaleX(0.9437);transform-origin:0 0;">5.12 s</div>
<div class="t" style="left:1741.6px;top:871.11px;font:400 10.5px 'Liberation Sans', sans-serif;line-height:1;color:#0c0c0d;transform:scaleX(0.9132);transform-origin:0 0;">10.24</div>
<div class="t" style="left:1.6px;top:893.53px;font:400 10px 'Liberation Mono', monospace;line-height:1;color:#737373;transform:scaleX(0.9603);transform-origin:0 0;">304</div>
<div class="t" style="left:107.8px;top:892.27px;font:400 11.5px 'Liberation Sans', sans-serif;line-height:1;color:#737373;transform:scaleX(0.7699);transform-origin:0 0;">GET</div>
<svg class="i" style="left:213px;top:892px;" width="10" height="11" viewBox="0 0 10 11"><path d="M2.3 5V3.6a2.7 2.7 0 0 1 5.4 0V5" fill="none" stroke="#b4b4b4" stroke-width="1.5"/><rect x="0" y="4.8" width="10" height="6.2" rx="1" fill="#b4b4b4"/></svg>
<div class="t" style="left:228.0px;top:892.27px;font:400 11.5px 'Liberation Sans', sans-serif;line-height:1;color:#737373;transform:scaleX(0.9943);transform-origin:0 0;">test.circularo.com</div>
<div class="t" style="left:427.5px;top:892.27px;font:400 11.5px 'Liberation Sans', sans-serif;line-height:1;color:#737373;transform:scaleX(1.0300);transform-origin:0 0;width:511.7px;overflow:hidden;padding-bottom:3px;">count</div>
<div class="t" style="left:960.5px;top:892.27px;font:400 11.5px 'Liberation Sans', sans-serif;line-height:1;color:#0a3fc4;transform:scaleX(0.9678);transform-origin:0 0;text-decoration:underline;">polyfills.54a6329f54ec0e56.js:18</div>
<div class="t" style="left:1125.3px;top:892.27px;font:400 11.5px 'Liberation Sans', sans-serif;line-height:1;color:#737373;transform:scaleX(0.8968);transform-origin:0 0;">(xhr)</div>
<div class="t" style="left:1173.3px;top:892.27px;font:400 11.5px 'Liberation Sans', sans-serif;line-height:1;color:#737373;transform:scaleX(1.0300);transform-origin:0 0;">json</div>
<div class="t" style="left:1280.0px;top:892.27px;font:400 11.5px 'Liberation Sans', sans-serif;line-height:1;color:#737373;transform:scaleX(0.9651);transform-origin:0 0;">cached</div>
<div class="t" style="left:1492.8px;top:892.27px;font:400 11.5px 'Liberation Sans', sans-serif;line-height:1;color:#737373;transform:scaleX(0.9381);transform-origin:0 0;">11 B</div>
<div class="a" style="left:1650.7px;top:891px;width:1px;height:12px;background:#7aa7d6;"></div>
<div class="t" style="left:1657.0px;top:893.46px;font:400 9.5px 'Liberation Sans', sans-serif;line-height:1;color:#737373;transform:scaleX(0.9200);transform-origin:0 0;">79 ms</div>
<div class="a" style="left:0px;top:915px;width:21.2px;height:13px;background:#058b00;border-radius:0 2.5px 2.5px 0"></div>
<div class="t" style="left:1.8px;top:916.53px;font:700 10px 'Liberation Mono', monospace;line-height:1;color:#ffffff;transform:scaleX(0.9547);transform-origin:0 0;">200</div>
<div class="t" style="left:107.8px;top:916.27px;font:400 11.5px 'Liberation Sans', sans-serif;line-height:1;color:#0c0c0d;transform:scaleX(0.8144);transform-origin:0 0;">POST</div>
<svg class="i" style="left:213px;top:916px;" width="10" height="11" viewBox="0 0 10 11"><path d="M2.3 5V3.6a2.7 2.7 0 0 1 5.4 0V5" fill="none" stroke="#8f8f9d" stroke-width="1.5"/><rect x="0" y="4.8" width="10" height="6.2" rx="1" fill="#8f8f9d"/></svg>
<svg class="i" style="left:228px;top:915px;" width="12" height="12" viewBox="0 0 12 12"><path d="M6 .8L1.5 2.5v3.2c0 2.8 2 4.8 4.5 5.8 2.5-1 4.5-3 4.5-5.8V2.5z" fill="none" stroke="#8f8f9d" stroke-width="1"/><path d="M.5 11.5L11 .5" stroke="#8f8f9d" stroke-width="1"/></svg>
<div class="t" style="left:244.4px;top:916.27px;font:400 11.5px 'Liberation Sans', sans-serif;line-height:1;color:#0c0c0d;transform:scaleX(0.9653);transform-origin:0 0;">o4505159621345280.ingest.sent...</div>
<div class="t" style="left:427.5px;top:916.27px;font:400 11.5px 'Liberation Sans', sans-serif;line-height:1;color:#0c0c0d;transform:scaleX(0.9760);transform-origin:0 0;width:540.0px;overflow:hidden;padding-bottom:3px;">/api/4505159785250816/envelope/?sentry_key=81ae2dd39a4a4e118e015bac9f361d7e&amp;sentry_version=7&amp;sentry_client=sentry.javascript</div>
<div class="t" style="left:960.5px;top:916.27px;font:400 11.5px 'Liberation Sans', sans-serif;line-height:1;color:#0a3fc4;transform:scaleX(0.9678);transform-origin:0 0;text-decoration:underline;">polyfills.54a6329f54ec0e56.js:18</div>
<div class="t" style="left:1125.3px;top:916.27px;font:400 11.5px 'Liberation Sans', sans-serif;line-height:1;color:#0c0c0d;transform:scaleX(0.9572);transform-origin:0 0;">(fetch)</div>
<div class="t" style="left:1173.3px;top:916.27px;font:400 11.5px 'Liberation Sans', sans-serif;line-height:1;color:#0c0c0d;transform:scaleX(1.0300);transform-origin:0 0;">json</div>
<div class="t" style="left:1280.0px;top:916.27px;font:400 11.5px 'Liberation Sans', sans-serif;line-height:1;color:#0c0c0d;transform:scaleX(0.9148);transform-origin:0 0;">540 B</div>
<div class="t" style="left:1492.8px;top:916.27px;font:400 11.5px 'Liberation Sans', sans-serif;line-height:1;color:#0c0c0d;transform:scaleX(0.9209);transform-origin:0 0;">41 B</div>
<div class="a" style="left:1689.7px;top:915px;width:2.5px;height:12px;background:#4b9fdd;"></div>
<div class="t" style="left:1696.0px;top:917.46px;font:400 9.5px 'Liberation Sans', sans-serif;line-height:1;color:#0c0c0d;transform:scaleX(0.9200);transform-origin:0 0;">154 ms</div>
<div class="a" style="left:0px;top:939px;width:21.2px;height:13px;background:#058b00;border-radius:0 2.5px 2.5px 0"></div>
<div class="t" style="left:1.8px;top:940.53px;font:700 10px 'Liberation Mono', monospace;line-height:1;color:#ffffff;transform:scaleX(0.9547);transform-origin:0 0;">204</div>
<div class="t" style="left:107.8px;top:940.27px;font:400 11.5px 'Liberation Sans', sans-serif;line-height:1;color:#0c0c0d;transform:scaleX(0.8144);transform-origin:0 0;">POST</div>
<svg class="i" style="left:213px;top:940px;" width="10" height="11" viewBox="0 0 10 11"><path d="M2.3 5V3.6a2.7 2.7 0 0 1 5.4 0V5" fill="none" stroke="#8f8f9d" stroke-width="1.5"/><rect x="0" y="4.8" width="10" height="6.2" rx="1" fill="#8f8f9d"/></svg>
<svg class="i" style="left:228px;top:939px;" width="12" height="12" viewBox="0 0 12 12"><path d="M6 .8L1.5 2.5v3.2c0 2.8 2 4.8 4.5 5.8 2.5-1 4.5-3 4.5-5.8V2.5z" fill="none" stroke="#8f8f9d" stroke-width="1"/><path d="M.5 11.5L11 .5" stroke="#8f8f9d" stroke-width="1"/></svg>
<div class="t" style="left:244.4px;top:940.27px;font:400 11.5px 'Liberation Sans', sans-serif;line-height:1;color:#0c0c0d;transform:scaleX(1.0094);transform-origin:0 0;">region1.google-analytics.com</div>
<div class="t" style="left:427.5px;top:940.27px;font:400 11.5px 'Liberation Sans', sans-serif;line-height:1;color:#0c0c0d;transform:scaleX(0.9850);transform-origin:0 0;width:535.0px;overflow:hidden;padding-bottom:3px;">collect?v=2&amp;tid=G-1E90S591DR&amp;gtm=45je4au0v892335426za200&amp;_p=1730923319380&amp;gcd=13l3l3l2l1l1&amp;npa=0</div>
<div class="t" style="left:960.5px;top:940.27px;font:400 11.5px 'Liberation Sans', sans-serif;line-height:1;color:#0a3fc4;transform:scaleX(0.9678);transform-origin:0 0;text-decoration:underline;">polyfills.54a6329f54ec0e56.js:18</div>
<div class="t" style="left:1125.3px;top:940.27px;font:400 11.5px 'Liberation Sans', sans-serif;line-height:1;color:#0c0c0d;transform:scaleX(0.9572);transform-origin:0 0;">(fetch)</div>
<div class="t" style="left:1173.3px;top:940.27px;font:400 11.5px 'Liberation Sans', sans-serif;line-height:1;color:#0c0c0d;transform:scaleX(1.0300);transform-origin:0 0;">plain</div>
<div class="t" style="left:1280.0px;top:940.27px;font:400 11.5px 'Liberation Sans', sans-serif;line-height:1;color:#0c0c0d;transform:scaleX(0.9148);transform-origin:0 0;">816 B</div>
<div class="t" style="left:1492.8px;top:940.27px;font:400 11.5px 'Liberation Sans', sans-serif;line-height:1;color:#0c0c0d;transform:scaleX(0.9093);transform-origin:0 0;">0 B</div>
<div class="a" style="left:1699.8px;top:939px;width:1px;height:12px;background:#7aa7d6;"></div>
<div class="t" style="left:1706.1px;top:941.46px;font:400 9.5px 'Liberation Sans', sans-serif;line-height:1;color:#0c0c0d;transform:scaleX(0.9200);transform-origin:0 0;">25 ms</div>
<div class="t" style="left:1.6px;top:965.53px;font:400 10px 'Liberation Mono', monospace;line-height:1;color:#737373;transform:scaleX(0.9603);transform-origin:0 0;">304</div>
<div class="t" style="left:107.8px;top:964.27px;font:400 11.5px 'Liberation Sans', sans-serif;line-height:1;color:#737373;transform:scaleX(0.7699);transform-origin:0 0;">GET</div>
<svg class="i" style="left:213px;top:964px;" width="10" height="11" viewBox="0 0 10 11"><path d="M2.3 5V3.6a2.7 2.7 0 0 1 5.4 0V5" fill="none" stroke="#b4b4b4" stroke-width="1.5"/><rect x="0" y="4.8" width="10" height="6.2" rx="1" fill="#b4b4b4"/></svg>
<div class="t" style="left:228.0px;top:964.27px;font:400 11.5px 'Liberation Sans', sans-serif;line-height:1;color:#737373;transform:scaleX(0.9943);transform-origin:0 0;">test.circularo.com</div>
<div class="t" style="left:427.5px;top:964.27px;font:400 11.5px 'Liberation Sans', sans-serif;line-height:1;color:#737373;transform:scaleX(0.9900);transform-origin:0 0;width:532.3px;overflow:hidden;padding-bottom:3px;">ping?appName=24.1.0</div>
<div class="t" style="left:960.5px;top:964.27px;font:400 11.5px 'Liberation Sans', sans-serif;line-height:1;color:#0a3fc4;transform:scaleX(0.9678);transform-origin:0 0;text-decoration:underline;">polyfills.54a6329f54ec0e56.js:18</div>
<div class="t" style="left:1125.3px;top:964.27px;font:400 11.5px 'Liberation Sans', sans-serif;line-height:1;color:#737373;transform:scaleX(0.8968);transform-origin:0 0;">(xhr)</div>
<div class="t" style="left:1173.3px;top:964.27px;font:400 11.5px 'Liberation Sans', sans-serif;line-height:1;color:#737373;transform:scaleX(1.0300);transform-origin:0 0;">json</div>
<div class="t" style="left:1280.0px;top:964.27px;font:400 11.5px 'Liberation Sans', sans-serif;line-height:1;color:#737373;transform:scaleX(0.9651);transform-origin:0 0;">cached</div>
<div class="t" style="left:1492.8px;top:964.27px;font:400 11.5px 'Liberation Sans', sans-serif;line-height:1;color:#737373;transform:scaleX(0.9040);transform-origin:0 0;">15 B</div>
<div class="a" style="left:1751.6000000000001px;top:963px;width:1px;height:12px;background:#7aa7d6;"></div>
<div class="t" style="left:1757.9px;top:965.46px;font:400 9.5px 'Liberation Sans', sans-serif;line-height:1;color:#737373;transform:scaleX(0.9200);transform-origin:0 0;">37 ms</div>
<div class="a" style="left:0px;top:987px;width:21.2px;height:13px;background:#058b00;border-radius:0 2.5px 2.5px 0"></div>
<div class="t" style="left:1.8px;top:988.53px;font:700 10px 'Liberation Mono', monospace;line-height:1;color:#ffffff;transform:scaleX(0.9547);transform-origin:0 0;">200</div>
<div class="t" style="left:107.8px;top:988.27px;font:400 11.5px 'Liberation Sans', sans-serif;line-height:1;color:#0c0c0d;transform:scaleX(0.8144);transform-origin:0 0;">POST</div>
<svg class="i" style="left:213px;top:988px;" width="10" height="11" viewBox="0 0 10 11"><path d="M2.3 5V3.6a2.7 2.7 0 0 1 5.4 0V5" fill="none" stroke="#8f8f9d" stroke-width="1.5"/><rect x="0" y="4.8" width="10" height="6.2" rx="1" fill="#8f8f9d"/></svg>
<svg class="i" style="left:228px;top:987px;" width="12" height="12" viewBox="0 0 12 12"><path d="M6 .8L1.5 2.5v3.2c0 2.8 2 4.8 4.5 5.8 2.5-1 4.5-3 4.5-5.8V2.5z" fill="none" stroke="#8f8f9d" stroke-width="1"/><path d="M.5 11.5L11 .5" stroke="#8f8f9d" stroke-width="1"/></svg>
<div class="t" style="left:244.4px;top:988.27px;font:400 11.5px 'Liberation Sans', sans-serif;line-height:1;color:#0c0c0d;transform:scaleX(0.9653);transform-origin:0 0;">o4505159621345280.ingest.sent...</div>
<div class="t" style="left:427.5px;top:988.27px;font:400 11.5px 'Liberation Sans', sans-serif;line-height:1;color:#0c0c0d;transform:scaleX(0.9760);transform-origin:0 0;width:540.0px;overflow:hidden;padding-bottom:3px;">/api/4505159785250816/envelope/?sentry_key=81ae2dd39a4a4e118e015bac9f361d7e&amp;sentry_version=7&amp;sentry_client=sentry.javascript</div>
<div class="t" style="left:960.5px;top:988.27px;font:400 11.5px 'Liberation Sans', sans-serif;line-height:1;color:#0a3fc4;transform:scaleX(0.9678);transform-origin:0 0;text-decoration:underline;">polyfills.54a6329f54ec0e56.js:18</div>
<div class="t" style="left:1125.3px;top:988.27px;font:400 11.5px 'Liberation Sans', sans-serif;line-height:1;color:#0c0c0d;transform:scaleX(0.9572);transform-origin:0 0;">(fetch)</div>
<div class="t" style="left:1173.3px;top:988.27px;font:400 11.5px 'Liberation Sans', sans-serif;line-height:1;color:#0c0c0d;transform:scaleX(1.0300);transform-origin:0 0;">json</div>
<div class="t" style="left:1280.0px;top:988.27px;font:400 11.5px 'Liberation Sans', sans-serif;line-height:1;color:#0c0c0d;transform:scaleX(0.9148);transform-origin:0 0;">540 B</div>
<div class="t" style="left:1492.8px;top:988.27px;font:400 11.5px 'Liberation Sans', sans-serif;line-height:1;color:#0c0c0d;transform:scaleX(0.9209);transform-origin:0 0;">41 B</div>
<div class="a" style="left:1775.9px;top:987px;width:1px;height:12px;background:#7aa7d6;"></div>
<div class="t" style="left:1782.2px;top:989.46px;font:400 9.5px 'Liberation Sans', sans-serif;line-height:1;color:#0c0c0d;transform:scaleX(0.9200);transform-origin:0 0;">19 ms</div>
<div class="a" style="left:0px;top:1011px;width:21.2px;height:13px;background:#058b00;border-radius:0 2.5px 2.5px 0"></div>
<div class="t" style="left:1.8px;top:1012.53px;font:700 10px 'Liberation Mono', monospace;line-height:1;color:#ffffff;transform:scaleX(0.9547);transform-origin:0 0;">200</div>
<div class="t" style="left:107.8px;top:1012.27px;font:400 11.5px 'Liberation Sans', sans-serif;line-height:1;color:#0c0c0d;transform:scaleX(0.8144);transform-origin:0 0;">POST</div>
<svg class="i" style="left:213px;top:1012px;" width="10" height="11" viewBox="0 0 10 11"><path d="M2.3 5V3.6a2.7 2.7 0 0 1 5.4 0V5" fill="none" stroke="#8f8f9d" stroke-width="1.5"/><rect x="0" y="4.8" width="10" height="6.2" rx="1" fill="#8f8f9d"/></svg>
<svg class="i" style="left:228px;top:1011px;" width="12" height="12" viewBox="0 0 12 12"><path d="M6 .8L1.5 2.5v3.2c0 2.8 2 4.8 4.5 5.8 2.5-1 4.5-3 4.5-5.8V2.5z" fill="none" stroke="#8f8f9d" stroke-width="1"/><path d="M.5 11.5L11 .5" stroke="#8f8f9d" stroke-width="1"/></svg>
<div class="t" style="left:244.4px;top:1012.27px;font:400 11.5px 'Liberation Sans', sans-serif;line-height:1;color:#0c0c0d;transform:scaleX(0.9653);transform-origin:0 0;">o4505159621345280.ingest.sent...</div>
<div class="t" style="left:427.5px;top:1012.27px;font:400 11.5px 'Liberation Sans', sans-serif;line-height:1;color:#0c0c0d;transform:scaleX(0.9760);transform-origin:0 0;width:540.0px;overflow:hidden;padding-bottom:3px;">/api/4505159785250816/envelope/?sentry_key=81ae2dd39a4a4e118e015bac9f361d7e&amp;sentry_version=7&amp;sentry_client=sentry.javascript</div>
<div class="t" style="left:960.5px;top:1012.27px;font:400 11.5px 'Liberation Sans', sans-serif;line-height:1;color:#0a3fc4;transform:scaleX(0.9678);transform-origin:0 0;text-decoration:underline;">polyfills.54a6329f54ec0e56.js:18</div>
<div class="t" style="left:1125.3px;top:1012.27px;font:400 11.5px 'Liberation Sans', sans-serif;line-height:1;color:#0c0c0d;transform:scaleX(0.9572);transform-origin:0 0;">(fetch)</div>
<div class="t" style="left:1173.3px;top:1012.27px;font:400 11.5px 'Liberation Sans', sans-serif;line-height:1;color:#0c0c0d;transform:scaleX(1.0300);transform-origin:0 0;">json</div>
<div class="t" style="left:1280.0px;top:1012.27px;font:400 11.5px 'Liberation Sans', sans-serif;line-height:1;color:#0c0c0d;transform:scaleX(0.9148);transform-origin:0 0;">540 B</div>
<div class="t" style="left:1492.8px;top:1012.27px;font:400 11.5px 'Liberation Sans', sans-serif;line-height:1;color:#0c0c0d;transform:scaleX(0.9209);transform-origin:0 0;">41 B</div>
<div class="a" style="left:1844.2px;top:1011px;width:1px;height:12px;background:#7aa7d6;"></div>
<div class="t" style="left:1850.5px;top:1013.46px;font:400 9.5px 'Liberation Sans', sans-serif;line-height:1;color:#0c0c0d;transform:scaleX(0.9200);transform-origin:0 0;">24 ms</div>
<div class="a" style="left:1907px;top:1005px;width:2px;height:14px;background:#8a8a8a;"></div>
<div class="a" style="left:1600px;top:863px;width:1px;height:167px;background:#3a8ee6;"></div>
<div class="a" style="left:1616px;top:863px;width:1px;height:167px;background:#e030c0;"></div>
<div class="a" style="left:0px;top:1030px;width:1910px;height:1px;background:#e0e0e2;"></div>
<div class="a" style="left:0px;top:1031px;width:1910px;height:21px;background:#f9f9fa;"></div>
<svg class="i" style="left:3.5px;top:1034.5px;" width="15" height="16" viewBox="0 0 15 16"><path d="M5 1h5M7.5 1v2" stroke="#0c0c0d" stroke-width="1.6"/><circle cx="7.5" cy="9.5" r="6" fill="none" stroke="#0c0c0d" stroke-width="1.5"/><path d="M7.5 9.5l2.5-2.5" stroke="#0c0c0d" stroke-width="1.4"/></svg>
<div class="t" style="left:35.2px;top:1037.07px;font:400 11.5px 'Liberation Sans', sans-serif;line-height:1;color:#38383d;transform:scaleX(0.9666);transform-origin:0 0;">96 requests</div>
<div class="a" style="left:104.5px;top:1034px;width:1px;height:16px;background:#d7d7db;"></div>
<div class="t" style="left:114.8px;top:1037.07px;font:400 11.5px 'Liberation Sans', sans-serif;line-height:1;color:#38383d;transform:scaleX(0.9680);transform-origin:0 0;">4.51 MB / 183.08 kB transferred</div>
<div class="a" style="left:283.5px;top:1034px;width:1px;height:16px;background:#d7d7db;"></div>
<div class="t" style="left:294.4px;top:1037.07px;font:400 11.5px 'Liberation Sans', sans-serif;line-height:1;color:#38383d;transform:scaleX(0.9492);transform-origin:0 0;">Finish: 17.72 s</div>
<div class="a" style="left:377px;top:1035px;width:12.5px;height:13px;background:#3a8ee6;border:1px solid #2a6ab0"></div>
<div class="t" style="left:394.4px;top:1037.07px;font:400 11.5px 'Liberation Sans', sans-serif;line-height:1;color:#38383d;transform:scaleX(0.9813);transform-origin:0 0;">DOMContentLoaded: 469 ms</div>
<div class="a" style="left:552.3px;top:1035px;width:13.4px;height:13px;background:#e030c0;border:1px solid #a0208a"></div>
<div class="t" style="left:570.7px;top:1037.07px;font:400 11.5px 'Liberation Sans', sans-serif;line-height:1;color:#38383d;transform:scaleX(0.9518);transform-origin:0 0;">load: 1.60 s</div>
<div class="t" style="left:1790.0px;top:842.04px;font:400 12px 'Liberation Sans', sans-serif;line-height:1;color:#0c0c0d;transform:scaleX(1.0075);transform-origin:0 0;">No Throttling</div>
<svg class="i" style="left:1863px;top:843px;" width="6" height="10" viewBox="0 0 6 10"><path d="M3 0L6 3.8H0zM3 10L0 6.2h6z" fill="#0c0c0d"/></svg>
<div class="a" style="left:1881px;top:838px;width:1px;height:20px;background:#e0e0e2;"></div>
<div class="a" style="left:1884px;top:836px;width:24px;height:23px;background:#e6e6e8;"></div>
<svg class="i" style="left:1888.5px;top:839.5px;" width="17" height="17" viewBox="0 0 17 17"><g stroke="#0c0c0d" stroke-width="1.8"><path d="M8.5 0v3.5" transform="rotate(0 8.5 8.5)"/><path d="M8.5 0v3.5" transform="rotate(45 8.5 8.5)"/><path d="M8.5 0v3.5" transform="rotate(90 8.5 8.5)"/><path d="M8.5 0v3.5" transform="rotate(135 8.5 8.5)"/><path d="M8.5 0v3.5" transform="rotate(180 8.5 8.5)"/><path d="M8.5 0v3.5" transform="rotate(225 8.5 8.5)"/><path d="M8.5 0v3.5" transform="rotate(270 8.5 8.5)"/><path d="M8.5 0v3.5" transform="rotate(315 8.5 8.5)"/></g><circle cx="8.5" cy="8.5" r="4.6" fill="none" stroke="#0c0c0d" stroke-width="1.8"/></svg>
<div class="a" style="left:1772px;top:860px;width:136px;height:130px;background:#ffffff;box-shadow:0 2px 6px rgba(0,0,0,.25)"></div>
<div class="t" style="left:1798.0px;top:876.84px;font:400 12px 'Liberation Sans', sans-serif;line-height:1;color:#0c0c0d;transform:scaleX(0.9238);transform-origin:0 0;">Persist Logs</div>
<div class="a" style="left:1777px;top:900px;width:126px;height:1px;background:#e0e0e2;"></div>
<div class="t" style="left:1798.0px;top:913.84px;font:400 12px 'Liberation Sans', sans-serif;line-height:1;color:#0c0c0d;transform:scaleX(0.9899);transform-origin:0 0;">Import HAR File</div>
<div class="t" style="left:1798.0px;top:937.84px;font:400 12px 'Liberation Sans', sans-serif;line-height:1;color:#0c0c0d;transform:scaleX(0.9468);transform-origin:0 0;">Save All As HAR</div>
<div class="t" style="left:1798.0px;top:961.84px;font:400 12px 'Liberation Sans', sans-serif;line-height:1;color:#0c0c0d;transform:scaleX(0.9846);transform-origin:0 0;">Copy All As HAR</div>
<div class="a" style="left:1772.5px;top:834px;width:136.5px;height:158px;border:5px solid #0070d8"></div>
<svg class="i" style="left:1700px;top:730px;" width="100" height="100" viewBox="0 0 100 100"><path d="M41.5 11L71 72" stroke="#0070d8" stroke-width="5.5" stroke-linecap="butt"/><path d="M57.5 77L81.5 65.5 82.5 98.5z" fill="#0070d8"/></svg>
</body></html>
